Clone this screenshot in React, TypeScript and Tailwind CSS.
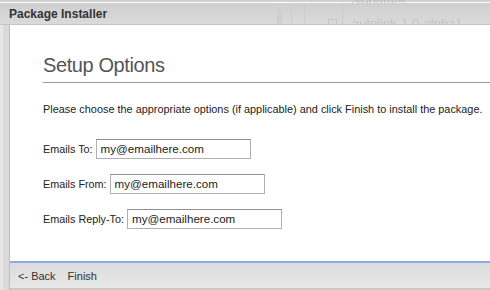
import React from "react";

const Field = ({ label }: { label: string }) => (
  <div className="flex items-center gap-[3px] h-[20px]">
    <span className="text-[10.8px] text-[#222] font-['Liberation_Sans',sans-serif]">{label}</span>
    <div className="w-[155px] h-[20px] border border-[#b0b0b0] border-t-[#8e8e8e] bg-white flex items-center pl-[4px] text-[11.6px] text-[#222] font-['Liberation_Sans',sans-serif]">
      my@emailhere.com
    </div>
  </div>
);

export default function App() {
  return (
    <div className="w-[490px] h-[290px] overflow-hidden bg-[#dedede] flex flex-col relative">
      <div className="h-[3px] bg-[#d0d0d0] border-b border-white shrink-0 relative">
        <span className="absolute left-[352px] top-[-10px] text-[13px] text-[#c2c2c2] font-['Liberation_Sans',sans-serif]">signature</span>
      </div>
      <div className="h-[22px] shrink-0 flex items-center pl-[9px] bg-gradient-to-b from-[#cfcfcf] to-[#dadada] border-b border-[#c4c4c4] relative overflow-hidden">
        <span className="absolute left-[277px] top-0 bottom-0 w-[5px] bg-[#d0d0d0]" />
        <span className="absolute left-[291px] top-0 bottom-0 w-px bg-[#cdcdcd]" />
        <span className="absolute left-[304px] top-0 bottom-0 w-px bg-[#cdcdcd]" />
        <span className="absolute left-[342px] top-0 bottom-0 w-px bg-[#cdcdcd]" />
        <span className="absolute left-[352px] top-[13px] text-[13px] leading-[15px] text-[#c4c4c4] font-['Liberation_Sans',sans-serif]">autolink-1.0-alpha1</span>
        <span className="absolute left-[328px] top-[16px] w-[9px] h-[9px] border border-[#c4c4c4]" />
        <span className="relative text-[12px] font-bold text-[#333] font-['Liberation_Sans',sans-serif]">Package Installer</span>
      </div>
      <div className="flex flex-1 min-h-0">
        <div className="w-[10px] shrink-0 bg-[#dadada] border-l-[3px] border-l-[#e6e6e6] border-r border-r-[#bdbdbd]" />
        <div className="flex-1 flex flex-col bg-white">
          <div className="flex-1 pl-[33px] pt-[28px]">
            <div className="text-[20px] tracking-[-0.4px] text-[#555] font-['Liberation_Sans',sans-serif] leading-[24px]">Setup Options</div>
            <div className="h-px bg-[#999] mt-[5px]" />
            <p className="mt-[20px] text-[10.9px] text-[#222] font-['Liberation_Sans',sans-serif] leading-[13px]">
              Please choose the appropriate options (if applicable) and click Finish to install the package.
            </p>
            <div className="mt-[23px] flex flex-col gap-[15px]">
              <Field label="Emails To:" />
              <Field label="Emails From:" />
              <Field label="Emails Reply-To:" />
            </div>
          </div>
          <div className="h-[29px] shrink-0 border-t-2 border-[#8eaae6] bg-gradient-to-b from-[#dcdcdc] to-[#e8e8e8] border-b-2 border-b-[#c8c8c8] flex items-center pl-[8px] pt-[2px] gap-[12px] text-[11px] text-[#333] font-['Liberation_Sans',sans-serif]">
            <span>&lt;- Back</span>
            <span>Finish</span>
          </div>
        </div>
      </div>
    </div>
  );
}
